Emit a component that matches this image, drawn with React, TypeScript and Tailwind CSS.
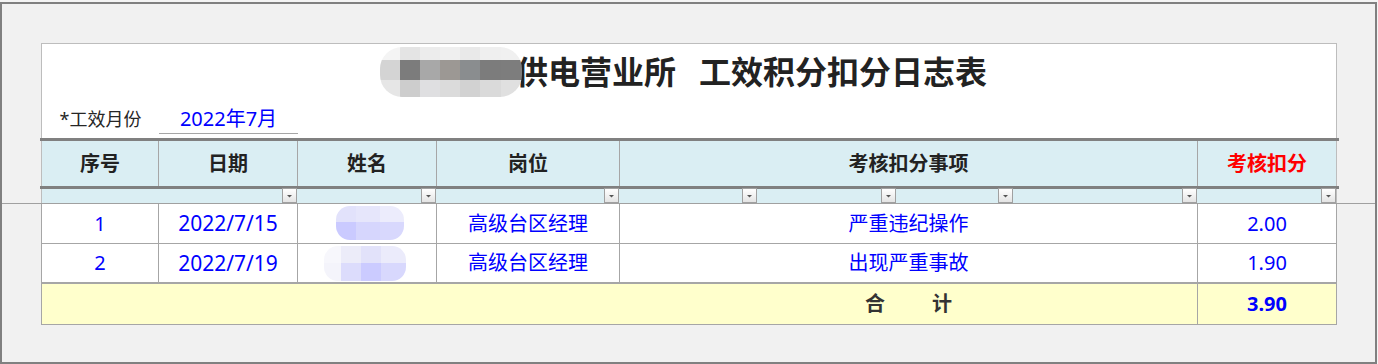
import React from "react";

const GRID = "grid grid-cols-[117px_139px_139px_183px_578px_138px]";

function Pix({
  cols,
  rows,
  colors,
  className,
}: {
  cols: number[];
  rows: number[];
  colors: string[][];
  className?: string;
}) {
  return (
    <div className={"flex flex-col overflow-hidden blur-[0.6px] " + (className ?? "")}>
      {rows.map((h, ri) => (
        <div key={ri} className="flex">
          {cols.map((w, ci) => (
            <div key={ci} style={{ width: w, height: h, background: colors[ri][ci] }} />
          ))}
        </div>
      ))}
    </div>
  );
}

function FilterBtn() {
  return (
    <div className="-mt-[1px] flex h-[15px] w-[15px] items-center justify-center border border-[#a0a0a0] bg-linear-to-b from-white to-[#e4e4e4]">
      <svg width="7" height="4" viewBox="0 0 7 4">
        <path d="M1 1h5L3.5 3.5z" fill="#555" />
      </svg>
    </div>
  );
}

const rows = [
  { no: "1", date: "2022/7/15", pos: "高级台区经理", item: "严重违纪操作", score: "2.00", blob: 1 },
  { no: "2", date: "2022/7/19", pos: "高级台区经理", item: "出现严重事故", score: "1.90", blob: 2 },
];

export default function App() {
  const cellB = "flex items-center justify-center border-r border-[#a6a6a6]";
  return (
    <div className="h-[364px] w-[1378px] bg-[#f4f4f4] pt-[2px] font-['Noto_Sans','Noto_Sans_CJK_SC',sans-serif]">
      <div className="box-border h-[362px] w-[1377px] border-2 border-[#808080] bg-[#f1f1f1]">
        {/* top (frozen) block */}
        <div className="border-b border-[#a0a0a0] pt-[39px]">
          <div className="ml-[39px] w-[1296px] border-x border-t border-[#bdbdbd] bg-white">
            {/* title */}
            <div className="flex h-[56px] items-center pl-[338px] text-[32px] font-bold leading-none text-[#222]">
              <Pix
                className="relative z-10 -mr-[6px] rounded-[22px]"
                cols={[20, 20, 20, 20, 20, 21, 21]}
                rows={[13, 20, 17]}
                colors={[
                  ["#f4f4f4", "#e4e4e4", "#ececec", "#efefef", "#e9e9e9", "#efefef", "#f0f0f0"],
                  ["#d4d4d4", "#7c7c7c", "#a8a8a8", "#9c9894", "#8a8d8f", "#7c7c7c", "#7d7d7d"],
                  ["#e6e6e6", "#cdcdcd", "#dfdfe1", "#dbdbdb", "#d2d2d2", "#dadada", "#e0e0e0"],
                ]}
              />
              <span>供电营业所</span>
              <span className="ml-[23px]">工效积分扣分日志表</span>
            </div>
            {/* month row */}
            <div className={GRID + " h-[34px]"}>
              <div className="flex items-center justify-center pt-[4px] text-[18px] leading-none text-[#262626]">
                *工效月份
              </div>
              <div className="flex items-center justify-center border-b border-[#a6a6a6] pt-[4px] text-[20px] leading-none text-[#0000ff]">
                2022年7月
              </div>
            </div>
            <div className="h-[4px]" />
            {/* thick line */}
            <div className="-ml-[2px] -mr-[3px] h-[3px] bg-[#808080]" />
            {/* header */}
            <div className={GRID + " h-[45px] bg-[#daeef3] text-[20px] font-bold leading-none text-[#222]"}>
              <div className={cellB}>序号</div>
              <div className={cellB}>日期</div>
              <div className={cellB}>姓名</div>
              <div className={cellB}>岗位</div>
              <div className={cellB}>考核扣分事项</div>
              <div className="flex items-center justify-center text-[#ff0000]">考核扣分</div>
            </div>
            <div className="-ml-[2px] -mr-[3px] h-[3px] bg-[#808080]" />
            {/* filter row */}
            <div className={GRID + " h-[14px] bg-[#daeef3]"}>
              <div />
              <div className="flex justify-end pr-[1px]"><FilterBtn /></div>
              <div className="flex justify-end pr-[1px]"><FilterBtn /></div>
              <div className="flex justify-end pr-[1px]"><FilterBtn /></div>
              <div className="flex">
                <div className="flex w-[138px] justify-end pr-[1px]"><FilterBtn /></div>
                <div className="flex w-[139px] justify-end pr-[1px]"><FilterBtn /></div>
                <div className="flex w-[117px] justify-end pr-[1px]"><FilterBtn /></div>
                <div className="flex w-[184px] justify-end pr-[1px]"><FilterBtn /></div>
              </div>
              <div className="flex justify-end"><FilterBtn /></div>
            </div>
          </div>
        </div>
        {/* data block */}
        <div className="ml-[39px] w-[1296px] border-x border-b border-[#a6a6a6] bg-white text-[20px] leading-none text-[#0000ff]">
          {rows.map((r, i) => (
            <div
              key={r.no}
              className={
                GRID +
                " h-[40px] " +
                (i === rows.length - 1 ? "border-b-2 border-[#a6a6a6]" : "border-b border-[#a6a6a6]")
              }
            >
              <div className={cellB}>{r.no}</div>
              <div className={cellB + " text-[21px]"}>{r.date}</div>
              <div className={cellB}>
                {r.blob === 1 ? (
                  <Pix
                    className="ml-[5px] -mt-[2px] rounded-[14px]"
                    cols={[20, 24, 24]}
                    rows={[16, 18]}
                    colors={[
                      ["#e2e2fb", "#e6e6fb", "#ececfc"],
                      ["#cacaff", "#d6d6fd", "#d8d8fd"],
                    ]}
                  />
                ) : (
                  <Pix
                    className="-ml-[5px] rounded-[14px]"
                    cols={[17, 20, 20, 25]}
                    rows={[17, 18]}
                    colors={[
                      ["#f7f7fc", "#ececf9", "#e2e2fa", "#ebebfb"],
                      ["#f4f4fb", "#dcdcfc", "#cbcbff", "#d8d8fd"],
                    ]}
                  />
                )}
              </div>
              <div className={cellB}>{r.pos}</div>
              <div className={cellB}>{r.item}</div>
              <div className="flex items-center justify-center">{r.score}</div>
            </div>
          ))}
          {/* total row */}
          <div className={GRID + " h-[40px] bg-[#ffffcc] font-bold"}>
            <div className="col-span-4" />
            <div className={cellB + " text-[#333]"}>
              <span>合</span>
              <span className="ml-[47px]">计</span>
            </div>
            <div className="flex items-center justify-center">3.90</div>
          </div>
        </div>
      </div>
    </div>
  );
}
